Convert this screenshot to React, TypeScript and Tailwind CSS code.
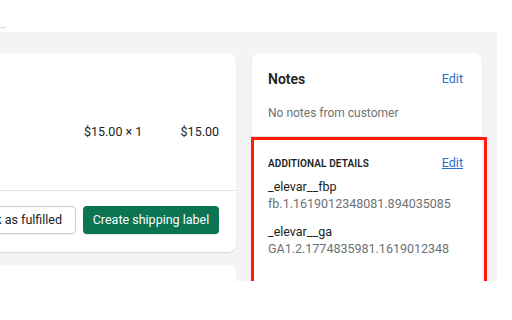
import React from "react";

export default function App() {
  return (
    <div
      className="w-[512px] h-[320px] bg-white overflow-hidden relative"
      style={{ fontFamily: "Roboto, 'Liberation Sans', sans-serif" }}
    >
      <div className="h-[32px] relative">
        <span className="absolute left-[0px] top-[22px] text-[11px] leading-[14px] text-[#9ca0a4]">··</span>
      </div>
      <div className="w-[497px] h-[249px] bg-[#f4f4f6] overflow-hidden flex gap-[16px] pt-[21px]">
        <div className="w-[256px] -ml-[20px] flex flex-col gap-[13px] shrink-0">
          <div className="bg-white rounded-[8px] shadow-[0_1px_1px_rgba(0,0,0,0.12)] h-[199px] shrink-0 flex flex-col">
            <div className="h-[138px] border-b border-[#e1e3e5] flex items-start">
              <div className="mt-[70px] w-full flex text-[12.5px] leading-[18px] text-[#202223]">
                <span className="ml-[104px]">$15.00 × 1</span>
                <span className="ml-auto mr-[17px]">$15.00</span>
              </div>
            </div>
            <div className="flex justify-end gap-[7px] pt-[15px] pr-[17px]">
              <button className="h-[28px] px-[13px] shrink-0 whitespace-nowrap rounded-[4px] border border-[#c9cccf] bg-white text-[12.5px] text-[#202223] shadow-[0_1px_0_rgba(0,0,0,0.05)]">
                Mark as fulfilled
              </button>
              <button className="h-[28px] w-[136px] shrink-0 whitespace-nowrap rounded-[4px] bg-[#0a7453] text-[12.5px] text-white shadow-[0_1px_0_rgba(0,0,0,0.1)]">
                Create shipping label
              </button>
            </div>
          </div>
          <div className="bg-white rounded-[8px] h-[80px] shrink-0"></div>
        </div>
        <div className="w-[230px] shrink-0 relative">
          <div className="bg-white rounded-[8px] h-[260px] shadow-[0_1px_1px_rgba(0,0,0,0.12)]">
            <div className="px-[16px] pt-[16px] pb-[14px] border-b border-[#e1e3e5]">
              <div className="flex items-center justify-between h-[20px]">
                <span className="text-[14px] font-semibold text-[#202223]">Notes</span>
                <span className="text-[12.5px] text-[#2c6ecb] mr-[3px]">Edit</span>
              </div>
              <div className="mt-[15px] text-[12px] leading-[18px] text-[#6d7175]">No notes from customer</div>
            </div>
            <div className="px-[16px] pt-[18px]">
              <div className="flex items-center justify-between h-[16px]">
                <span className="text-[10px] font-semibold tracking-[0.1px] text-[#202223]">ADDITIONAL DETAILS</span>
                <span className="text-[12.5px] text-[#2c6ecb] underline mr-[3px]">Edit</span>
              </div>
              <div className="mt-[7px] text-[12.5px] leading-[17px] text-[#202223]">_elevar__fbp</div>
              <div className="text-[12.5px] leading-[17px] text-[#6d7175]">fb.1.1619012348081.894035085</div>
              <div className="mt-[11px] text-[12.5px] leading-[17px] text-[#202223]">_elevar__ga</div>
              <div className="text-[12.5px] leading-[17px] text-[#6d7175]">GA1.2.1774835981.1619012348</div>
            </div>
          </div>
        </div>
      </div>
      <div className="absolute left-[251px] top-[137px] w-[236px] h-[144px] border-[3px] border-b-0 border-[#ff1a0a] pointer-events-none"></div>
    </div>
  );
}
